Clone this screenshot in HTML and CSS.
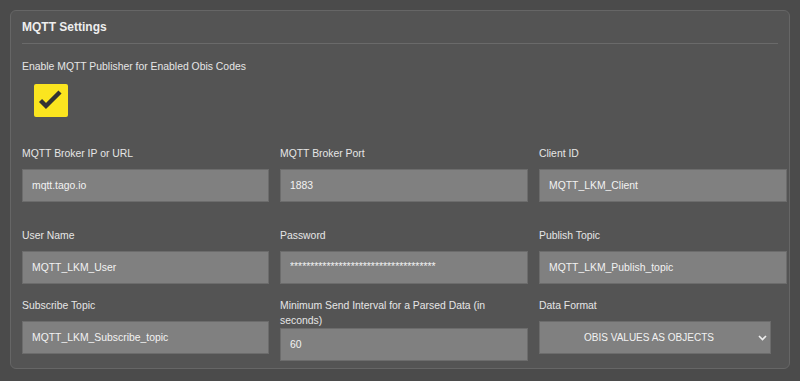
FILE: index.html
```html
<!DOCTYPE html>
<html lang="en">
<head>
  <meta charset="UTF-8">
  <meta name="viewport" content="width=device-width, initial-scale=1.0">
  <title>MQTT Settings</title>
  <link rel="stylesheet" href="styles.css">
</head>
<body>

  <div class="panel">
    <h2 class="panel-title">MQTT Settings</h2>
    <div class="divider"></div>

    <p class="enable-label">Enable MQTT Publisher for Enabled Obis Codes</p>
    <div class="check">
      <svg width="34" height="33" viewBox="0 0 34 33">
        <path d="M6.5 16.5 L12 22 L26 8" fill="none" stroke="#333" stroke-width="4.4"/>
      </svg>
    </div>

    <div class="row row-1">
      <div class="field">
        <label>MQTT Broker IP or URL</label>
        <input type="text" value="mqtt.tago.io">
      </div>
      <div class="field">
        <label>MQTT Broker Port</label>
        <input type="text" value="1883">
      </div>
      <div class="field">
        <label>Client ID</label>
        <input type="text" value="MQTT_LKM_Client">
      </div>
    </div>

    <div class="row row-2">
      <div class="field">
        <label>User Name</label>
        <input type="text" value="MQTT_LKM_User">
      </div>
      <div class="field">
        <label>Password</label>
        <input type="text" class="pass" value="************************************">
      </div>
      <div class="field">
        <label>Publish Topic</label>
        <input type="text" value="MQTT_LKM_Publish_topic">
      </div>
    </div>

    <div class="row row-3">
      <div class="field">
        <label>Subscribe Topic</label>
        <input type="text" value="MQTT_LKM_Subscribe_topic">
      </div>
      <div class="field">
        <label>Minimum Send Interval for a Parsed Data (in seconds)</label>
        <input type="text" value="60">
      </div>
      <div class="field">
        <label>Data Format</label>
        <div class="select-wrap">
          <select>
            <option>OBIS VALUES AS OBJECTS</option>
          </select>
          <svg class="chevron" width="9" height="6" viewBox="0 0 9 6">
            <path d="M1 1 L4.5 4.5 L8 1" fill="none" stroke="#eee" stroke-width="1.6"/>
          </svg>
        </div>
      </div>
    </div>
  </div>

</body>
</html>
```

FILE: styles.css
```css
* { box-sizing: border-box; }
body { margin: 0; padding: 10px; background: #4b4b4b; color: #e6e6e6; font-family: "Liberation Sans", Arial, sans-serif; }
.panel { background: #545454; border: 1px solid #666; border-radius: 6px; padding: 8px 1px 7px 11px; }
.panel-title { margin: 0 0 8px; font-size: 12px; line-height: 16px; font-weight: bold; color: #eee; }
.divider { height: 1px; background: #6a6a6a; margin-right: 10px; }
.enable-label { margin: 15px 0 0; font-size: 10.4px; line-height: 15px; }
.check { width: 34px; height: 33px; margin: 10px 0 0 12px; background: #fbe51f; border-radius: 2px; }
.check svg { display: block; }
.row { display: grid; grid-template-columns: 247px 248px 248px; column-gap: 11px; align-items: start; }
.row-1 { margin-top: 29px; }
.row-2 { margin-top: 26px; }
.row-3 { margin-top: 14px; }
.field label { display: block; min-height: 23px; font-size: 10.4px; line-height: 15px; color: #e6e6e6; }
.field input, .field select { display: block; width: 100%; height: 33px; margin: 0; padding: 0 9px; background: #808080; border: 1px solid #6c6c6c; border-radius: 0; color: #f2f2f2; font-family: "Liberation Sans", Arial, sans-serif; font-size: 10.4px; outline: none; }
.field .pass { padding-bottom: 3px; }
.select-wrap { position: relative; width: 232px; }
.field select { appearance: none; -webkit-appearance: none; padding: 0 16px 0 4px; text-align: center; text-align-last: center; font-size: 10px; }
.chevron { position: absolute; right: 4px; top: 14px; }
```
